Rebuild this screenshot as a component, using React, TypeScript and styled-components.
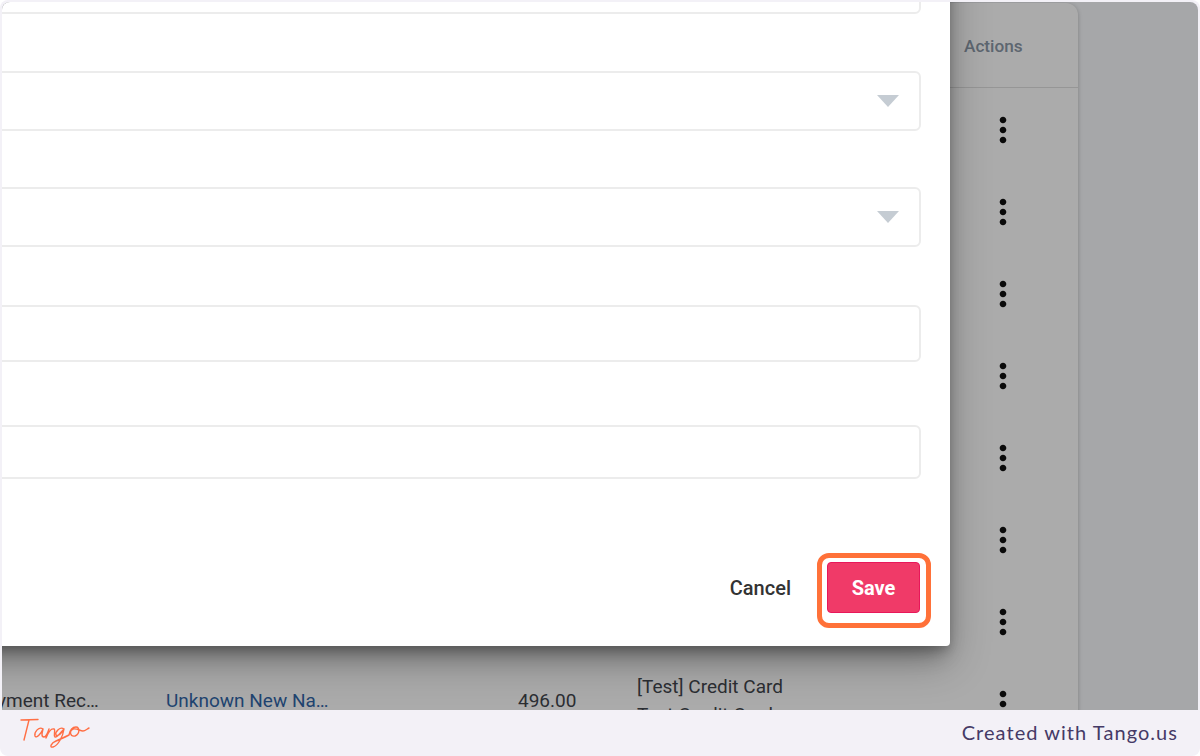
import React from 'react';
import styled, { createGlobalStyle } from 'styled-components';

const rowCount = 8;

const MoreVert = () => (
  <DotsIcon viewBox="0 0 24 24" aria-hidden="true">
    <path d="M12 8c1.1 0 2-.9 2-2s-.9-2-2-2-2 .9-2 2 .9 2 2 2zm0 2c-1.1 0-2 .9-2 2s.9 2 2 2 2-.9 2-2-.9-2-2-2zm0 6c-1.1 0-2 .9-2 2s.9 2 2 2 2-.9 2-2-.9-2-2-2z" />
  </DotsIcon>
);

const TangoLogo = () => (
  <LogoIcon viewBox="0 0 70 34" role="img" aria-label="Tango">
    <path d="M1 4 L18 3.5 M9 4 L4 24" />
    <path d="M23 13 C19 10 14 16 15 20 C16 23 21 18 23 13 C22 17 21 21 24 21 C26 21 28 16 29 13 C28 16 27 19 26 22 C28 17 31 12 34 13 C36 14 33 19 35 21 C37 22 41 16 44 13 C40 10 35 16 36 19 C38 21 42 17 44 13 C43 20 38 30 33 31 C29 32 31 27 36 25 C41 23 45 21 49 19 C50 14 53 11 56 11 C60 11 60 18 55 20 C50 21 49 15 53 13 C57 12 60 15 63 15 C65 15 67 13 69 12" />
  </LogoIcon>
);

const App = () => {
  return (
    <Page>
      <GlobalStyle />
      <Stage>
        <TablePanel>
          <HeaderRow>
            <ActionsHead>Actions</ActionsHead>
          </HeaderRow>
          {Array.from({ length: rowCount }).map((_, i) => (
            <Row key={i}>
              {i === rowCount - 1 ? (
                <>
                  <NameCell>Payment Received</NameCell>
                  <LinkCell>Unknown New Name Here</LinkCell>
                  <AmountCell>496.00</AmountCell>
                  <MethodCell>
                    <div>[Test] Credit Card</div>
                    <div>Test Credit Card</div>
                  </MethodCell>
                </>
              ) : (
                <EmptyCells />
              )}
              <ActionCell>
                <MoreVert />
              </ActionCell>
            </Row>
          ))}
        </TablePanel>
        <Modal>
          <Field $height={60} />
          <Field $height={59.5} $gap={57}>
            <Caret />
          </Field>
          <Field $height={60.5} $gap={56}>
            <Caret />
          </Field>
          <Field $height={56.5} $gap={58} />
          <Field $height={53.5} $gap={63.5} />
          <ModalFooter>
            <CancelButton>Cancel</CancelButton>
            <SaveWrap>
              <SaveButton>Save</SaveButton>
              <Highlight />
            </SaveWrap>
          </ModalFooter>
        </Modal>
      </Stage>
      <Footer>
        <TangoLogo />
        <Credit>Created with Tango.us</Credit>
      </Footer>
    </Page>
  );
};

export default App;

const GlobalStyle = createGlobalStyle`
  html, body {
    margin: 0;
    background: #fff;
    overflow: hidden;
  }
`;

const Page = styled.div`
  width: 1200px;
  height: 756px;
  display: flex;
  flex-direction: column;
  background: #f3f1f7;
  border-radius: 8px;
  font-family: Roboto, sans-serif;
`;

const Stage = styled.div`
  position: relative;
  height: 708px;
  margin: 2px 2px 0;
  overflow: hidden;
  background: #a6a7a9;
  border-radius: 8px 8px 0 0;
`;

const TablePanel = styled.div`
  width: 1176px;
  margin: 1px 0 0 -100px;
  background: #ababab;
  border-radius: 0 12px 0 0;
  box-shadow: 0 1px 4px rgba(0, 0, 0, 0.25);
`;

const HeaderRow = styled.div`
  height: 84px;
  margin-bottom: 1px;
  display: flex;
  align-items: center;
  justify-content: flex-end;
  border-bottom: 1px solid #969696;
`;

const ActionsHead = styled.div`
  width: 114px;
  padding-top: 1px;
  font-size: 17.2px;
  font-weight: 500;
  color: #5d6670;
`;

const Row = styled.div`
  height: 82px;
  display: grid;
  grid-template-columns: 191px 352px 119px 327px 1fr;
  padding-left: 73px;
  align-items: center;
  font-size: 19px;
  color: #2b2e33;
`;

const EmptyCells = styled.div`
  grid-column: 1 / 5;
`;

const NameCell = styled.div`
  width: 127px;
  padding-bottom: 8px;
  overflow: hidden;
  white-space: nowrap;
  text-overflow: ellipsis;
`;

const LinkCell = styled(NameCell)`
  width: 163px;
  color: #1f4470;
`;

const AmountCell = styled.div`
  padding-bottom: 8px;
`;

const MethodCell = styled.div`
  line-height: 28px;
  padding-bottom: 6px;
`;

const ActionCell = styled.div`
  display: flex;
  padding-left: 19px;
`;

const DotsIcon = styled.svg`
  width: 40px;
  height: 40px;
  fill: #0a0a0a;
`;

const Modal = styled.div`
  position: absolute;
  top: -60px;
  left: -300px;
  width: 1248px;
  height: 704px;
  box-sizing: border-box;
  padding: 12px 30px 33px;
  display: flex;
  flex-direction: column;
  background: #fff;
  border-radius: 4px;
  box-shadow: 0 14px 18px -6px rgba(0, 0, 0, 0.25),
    0 4px 10px rgba(0, 0, 0, 0.16), 0 16px 40px rgba(0, 0, 0, 0.28);
`;

const Field = styled.div<{ $height: number; $gap?: number }>`
  height: ${(p) => p.$height}px;
  margin: ${(p) => p.$gap ?? 0}px -1px 0 0;
  box-sizing: border-box;
  display: flex;
  align-items: center;
  justify-content: flex-end;
  padding-right: 20px;
  border: 2px solid #ececec;
  border-radius: 6px;
`;

const Caret = styled.div`
  width: 0;
  height: 0;
  border-left: 11px solid transparent;
  border-right: 11px solid transparent;
  border-top: 12px solid #c5ccd3;
`;

const ModalFooter = styled.div`
  margin-top: auto;
  display: flex;
  align-items: center;
  justify-content: flex-end;
  gap: 36px;
`;

const CancelButton = styled.div`
  font-size: 20px;
  font-weight: 500;
  color: #333;
`;

const SaveWrap = styled.div`
  position: relative;
`;

const SaveButton = styled.div`
  width: 93px;
  height: 51px;
  box-sizing: border-box;
  display: flex;
  align-items: center;
  justify-content: center;
  padding-top: 1px;
  background: #f03a68;
  border: 1px solid #e8175a;
  border-radius: 4px;
  font-size: 20px;
  font-weight: 700;
  color: #fff;
`;

const Highlight = styled.div`
  position: absolute;
  top: -9px;
  left: -10px;
  right: -11px;
  bottom: -15px;
  border: 5px solid #ff7139;
  border-radius: 12px;
`;

const Footer = styled.div`
  flex: 1;
  display: flex;
  align-items: center;
  justify-content: space-between;
  padding: 0 22px 0 20px;
`;

const LogoIcon = styled.svg`
  width: 70px;
  height: 34px;
  fill: none;
  stroke: #ff6f45;
  stroke-width: 1.4;
  stroke-linecap: round;
  stroke-linejoin: round;
`;

const Credit = styled.div`
  padding-bottom: 2px;
  font-family: Lato, sans-serif;
  font-size: 20px;
  letter-spacing: 1.05px;
  color: #453a66;
`;
